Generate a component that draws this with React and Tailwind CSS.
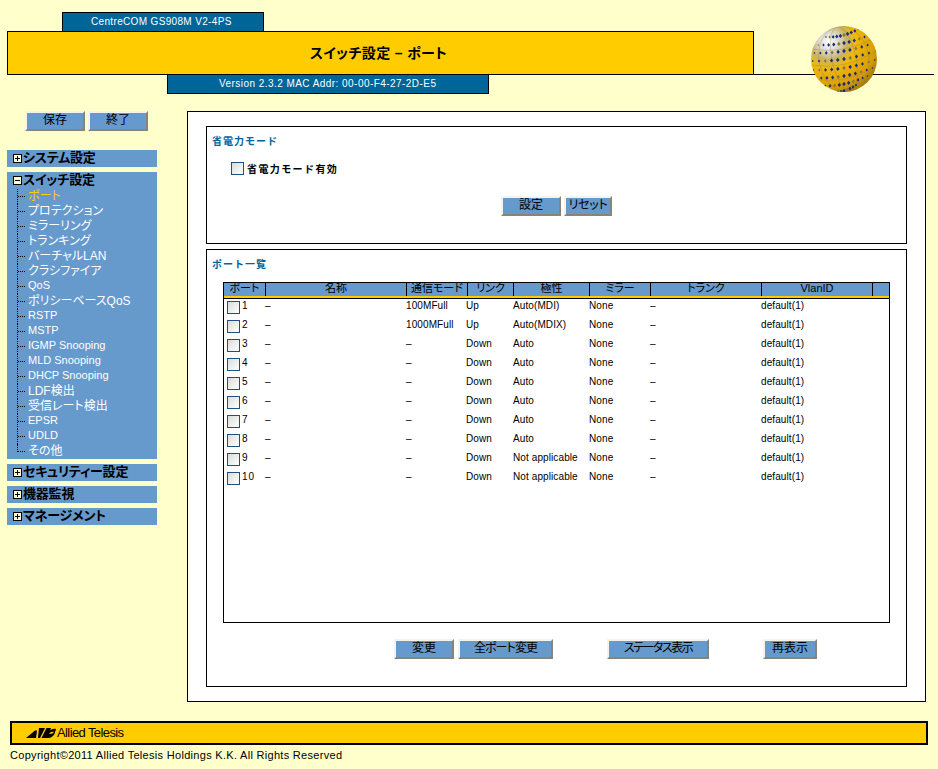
const menuItems = [
  "ポート", "プロテクション", "ミラーリング", "トランキング", "バーチャルLAN", "クラシファイア",
  "QoS", "ポリシーベースQoS", "RSTP", "MSTP", "IGMP Snooping", "MLD Snooping",
  "DHCP Snooping", "LDF検出", "受信レート検出", "EPSR", "UDLD", "その他",
];

const ports = [
  ["1", "100MFull", "Up", "Auto(MDI)"],
  ["2", "1000MFull", "Up", "Auto(MDIX)"],
  ["3", "–", "Down", "Auto"],
  ["4", "–", "Down", "Auto"],
  ["5", "–", "Down", "Auto"],
  ["6", "–", "Down", "Auto"],
  ["7", "–", "Down", "Auto"],
  ["8", "–", "Down", "Auto"],
  ["9", "–", "Down", "Not applicable"],
  ["10", "–", "Down", "Not applicable"],
];

const headers = ["ポート", "名称", "通信モード", "リンク", "極性", "ミラー", "トランク", "VlanID", ""];
const headCols = "grid grid-cols-[42px_141px_61px_46px_76px_61px_111px_111px_1fr]";
const rowCols = "grid grid-cols-[41px_141px_60px_47px_76px_61px_111px_1fr]";
const palt = "[font-feature-settings:'palt']";

const Btn = ({ w, children }) => (
  <button className={`${w} h-[20px] whitespace-nowrap bg-[#6699cc] border-2 border-t-[#f4f4ec] border-l-[#f4f4ec] border-b-[#85857a] border-r-[#85857a] text-[12px] leading-[13px] pb-[2px] text-black ${palt}`}>
    {children}
  </button>
);

const Check = () => (
  <span className="block w-[13px] h-[13px] shrink-0 border border-[#1c5180] bg-linear-to-br from-[#dcdcd7] to-white" />
);

const Toggle = ({ open }) => (
  <span className="relative block w-[9px] h-[9px] mr-[1px] shrink-0 border border-black bg-[#ffffcc]">
    <span className="absolute left-[1px] top-[3px] w-[5px] h-[1px] bg-black" />
    {!open && <span className="absolute left-[3px] top-[1px] w-[1px] h-[5px] bg-black" />}
  </span>
);

const MenuHead = ({ open, children }) => (
  <div className={`flex items-center h-[17px] pl-[6px] text-[13px] font-bold tracking-[-0.2px] text-black ${palt}`}>
    <Toggle open={open} />
    <span className="-mt-[1px]">{children}</span>
  </div>
);

const Globe = () => {
  const rows = [-27, -19, -11, -3, 6, 14, 22, 29];
  return (
    <svg viewBox="0 0 68 68" className="absolute left-[810px] top-[25px] w-[68px] h-[68px]">
      <defs>
        <radialGradient id="ball" cx="0.27" cy="0.24" r="0.9">
          <stop offset="0" stopColor="#ffffff" />
          <stop offset="0.16" stopColor="#dedbd0" />
          <stop offset="0.3" stopColor="#c8b468" />
          <stop offset="0.45" stopColor="#f0b810" />
          <stop offset="0.78" stopColor="#d89e08" />
          <stop offset="1" stopColor="#8a6a10" />
        </radialGradient>
        <clipPath id="ballClip">
          <circle cx="34" cy="34" r="33" />
        </clipPath>
      </defs>
      <circle cx="34" cy="34" r="33" fill="url(#ball)" />
      <g clipPath="url(#ballClip)">
        <g fill="none" stroke="#8a7a3a" strokeWidth="0.5" opacity="0.6">
          <ellipse cx="34" cy="34" rx="12" ry="33" transform="rotate(-12 34 34)" />
          <ellipse cx="34" cy="34" rx="25" ry="33" transform="rotate(-12 34 34)" />
          <path d="M1 40Q34 46 67 26M1 24Q34 30 67 12M3 54Q34 60 66 42" />
        </g>
        {rows.map((dy, r) =>
          Array.from({ length: 11 }).map((_, i) => {
            const t = (i - 5) / 5;
            const half = Math.sqrt(Math.max(0, 1089 - dy * dy));
            const x = 34 + t * half * 0.95;
            const y = 34 + dy - t * 5 + (1 - t * t) * 3;
            const s = 2.2 * (1 - 0.5 * t * t);
            return (
              <path
                key={`${r}-${i}`}
                d={`M${x} ${y - s}L${x + s * 0.8} ${y}L${x} ${y + s}L${x - s * 0.8} ${y}Z`}
                fill={(i + r) % 4 === 1 ? "#8a7a3a" : "#1c2a78"}
              />
            );
          })
        )}
      </g>
    </svg>
  );
};

const Logo = () => (
  <svg viewBox="0 0 30 10" className="w-[30px] h-[10px] shrink-0">
    <path d="M0 10L9 2.5H11L10 10Z" fill="#000" />
    <path d="M12 10L13 0H19L14 10Z" fill="#000" />
    <path d="M15.5 10L20.5 0H25L22 10Z" fill="#000" />
    <path d="M22 5C24 1 28 0 30 1L28.5 6C27 8.5 24.5 10 22.5 10H18.5Z" fill="#000" />
    <path d="M23 5.5C24.5 3.8 26.5 3.4 28 4C26.5 5.8 24.5 6.2 23 5.5Z" fill="#ffcc00" />
  </svg>
);

export default function App() {
  return (
    <div className="relative w-[938px] h-[769px] overflow-hidden bg-[#ffffcc] font-['Liberation_Sans','Noto_Sans_CJK_JP',sans-serif] text-black">
      <Globe />

      {/* header */}
      <div className="pt-[12px]">
        <div className="ml-[62px] w-[202px] h-[19px] border border-b-0 border-black bg-[#006699] text-white text-[10px] tracking-[0.34px] leading-[18px] pl-[28px]">
          CentreCOM GS908M V2-4PS
        </div>
        <div className="flex">
          <div className={`ml-[7px] w-[747px] h-[44px] border border-black bg-[#ffcc00] flex items-center justify-center pr-[4px] text-[14px] font-bold tracking-[0.35px] ${palt}`}>
            スイッチ設定 – ポート
          </div>
          <div className="w-[180px] h-[44px] border-b border-black" />
        </div>
        <div className="ml-[167px] w-[322px] h-[19px] border border-t-0 border-black bg-[#006699] text-white text-[10px] tracking-[0.45px] leading-[17px] pl-[51px]">
          Version 2.3.2 MAC Addr: 00-00-F4-27-2D-E5
        </div>
      </div>

      <div className="flex mt-[17px]">
        {/* side menu */}
        <div className="ml-[7px] w-[150px]">
          <div className="flex gap-[3px] ml-[18px]">
            <Btn w="w-[60px]">保存</Btn>
            <Btn w="w-[60px]">終了</Btn>
          </div>
          <div className="mt-[19px] flex flex-col gap-[5px]">
            <div className="bg-[#6699cc]"><MenuHead>システム設定</MenuHead></div>
            <div className="bg-[#6699cc] h-[287px]">
              <MenuHead open>スイッチ設定</MenuHead>
              {menuItems.map((item, i) => (
                <div key={item} className={`flex items-center h-[15px] ml-[10px] text-white ${palt} ${/^[A-Za-z ]+$/.test(item) ? "text-[11px]" : "text-[12px]"}`}>
                  <span className="w-[11px] h-full shrink-0 flex items-start">
                    <span className={`w-[8px] border-l border-dotted border-black ${i === menuItems.length - 1 ? "h-[8px] border-b" : "h-full"}`}>
                      {i !== menuItems.length - 1 && <span className="block w-[7px] h-[8px] border-b border-dotted border-black" />}
                    </span>
                  </span>
                  <span className={`-mt-[2px] ${i === 0 ? "text-[#ffcc00]" : ""}`}>{item}</span>
                </div>
              ))}
            </div>
            <div className="bg-[#6699cc]"><MenuHead>セキュリティー設定</MenuHead></div>
            <div className="bg-[#6699cc]"><MenuHead>機器監視</MenuHead></div>
            <div className="bg-[#6699cc]"><MenuHead>マネージメント</MenuHead></div>
          </div>
        </div>

        {/* main */}
        <div className="ml-[30px] w-[739px] h-[591px] border border-black bg-white px-[18px] pt-[14px]">
          <div className="w-[701px] h-[118px] border border-black">
            <div className="pl-[5px] pt-[7px] text-[10px] font-bold tracking-[1px] text-[#006699]">省電力モード</div>
            <div className="flex items-start ml-[24px] mt-[13px] gap-[3px] text-[10px] font-bold tracking-[1.4px]">
              <Check />
              <span>省電力モード有効</span>
            </div>
            <div className="flex gap-[3px] ml-[294px] mt-[19px]">
              <Btn w="w-[60px]">設定</Btn>
              <Btn w="w-[48px] tracking-[-0.3px]">リセット</Btn>
            </div>
          </div>

          <div className="w-[701px] h-[438px] mt-[5px] border border-black">
            <div className="pl-[5px] pt-[7px] text-[10px] font-bold tracking-[1px] text-[#006699] h-[32px]">ポート一覧</div>
            <div className="ml-[16px] w-[667px] h-[341px] border border-black">
              <div className={`${headCols} h-[15px] bg-[#6699cc] border-b-2 border-b-[#ffcc00]`}>
                {headers.map((h, i) => (
                  <div key={i} className={`text-center text-[11px] leading-[11px] ${palt} ${i < 8 ? "border-r border-black" : ""}`}>{h}</div>
                ))}
              </div>
              <div className="h-[1px] bg-black" />
              <div className="-mt-[1px]">
                {ports.map(([n, mode, link, pol]) => (
                  <div key={n} className={`${rowCols} h-[19px] items-center text-[10px] tracking-[0.1px]`}>
                    <div className="flex items-center gap-[2px] pl-[3px]">
                      <Check />
                      <span className="tracking-[1px] pb-[4px]">{n}</span>
                    </div>
                    <div className="pb-[4px]">–</div>
                    <div className="pb-[4px]">{mode}</div>
                    <div className="pb-[4px]">{link}</div>
                    <div className="pb-[4px]">{pol}</div>
                    <div className="pb-[4px]">None</div>
                    <div className="pb-[4px]">–</div>
                    <div className="pb-[4px]">default(1)</div>
                  </div>
                ))}
              </div>
            </div>
            <div className="flex ml-[187px] mt-[16px]">
              <Btn w="w-[60px]">変更</Btn>
              <span className="w-[4px]" />
              <Btn w="w-[95px] tracking-[-0.9px]">全ポート変更</Btn>
              <span className="w-[54px]" />
              <Btn w="w-[102px] tracking-[-1.5px]">ステータス表示</Btn>
              <span className="w-[54px]" />
              <Btn w="w-[54px]">再表示</Btn>
            </div>
          </div>
        </div>
      </div>

      {/* footer */}
      <div className="ml-[10px] mt-[19px] w-[918px] h-[24px] border-2 border-black bg-[#ffcc00] flex items-center pl-[14px]">
        <Logo />
        <span className="ml-[1px] text-[13px] tracking-[-0.6px]">Allied Telesis</span>
      </div>
      <div className="ml-[10px] mt-[3px] text-[11px] tracking-[0.3px] leading-[14px]">
        Copyright©2011 Allied Telesis Holdings K.K. All Rights Reserved
      </div>
    </div>
  );
}
